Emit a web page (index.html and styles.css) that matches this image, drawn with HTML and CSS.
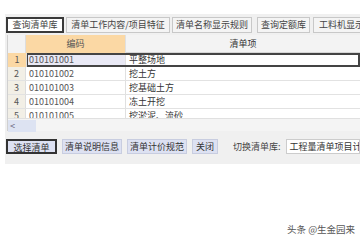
FILE: index.html
```html
<!DOCTYPE html>
<html lang="zh">
<head>
  <meta charset="UTF-8">
  <title>查询清单库</title>
  <link rel="stylesheet" href="styles.css">
</head>
<body>
  <div class="window">
    <div class="tabs">
      <div class="tab active">查询清单库</div>
      <div class="tab t2">清单工作内容/项目特征</div>
      <div class="tab t3">清单名称显示规则</div>
      <div class="tab t4">查询定额库</div>
      <div class="tab t5">工料机显示</div>
    </div>

    <div class="grid">
      <div class="row head">
        <div class="num"></div>
        <div class="code sorted">编码</div>
        <div class="name">清单项</div>
      </div>
      <div class="rows">
        <div class="row current">
          <div class="num">1</div>
          <div class="code">010101001</div>
          <div class="name">平整场地</div>
        </div>
        <div class="row">
          <div class="num">2</div>
          <div class="code">010101002</div>
          <div class="name">挖土方</div>
        </div>
        <div class="row">
          <div class="num">3</div>
          <div class="code">010101003</div>
          <div class="name">挖基础土方</div>
        </div>
        <div class="row">
          <div class="num">4</div>
          <div class="code">010101004</div>
          <div class="name">冻土开挖</div>
        </div>
        <div class="row">
          <div class="num">5</div>
          <div class="code">010101005</div>
          <div class="name">挖淤泥、流砂</div>
        </div>
      </div>
      <div class="hscroll">
        <span class="arrow">&lt;</span>
      </div>
    </div>

    <div class="actions">
      <button class="btn active">选择清单</button>
      <button class="btn wide">清单说明信息</button>
      <button class="btn wide">清单计价规范</button>
      <button class="btn short">关闭</button>
      <span class="label">切换清单库:</span>
      <div class="select">工程量清单项目计量规范</div>
    </div>
  </div>

  <div class="watermark">头条 @生金园来</div>
</body>
</html>
```

FILE: styles.css
```css
body {
  margin: 0;
  background-color: #fff;
  font-family: "Noto Sans CJK SC", "DejaVu Sans", sans-serif;
  font-size: 9px;
  color: #333;
  width: 360px;
  height: 240px;
  overflow: hidden;
  position: relative;
}
.window {
  margin: 14px 0 0 5px;
  height: 150px;
  background-color: #f0f0f0;
  padding: 3px 0 0 1px;
  box-sizing: border-box;
  overflow: hidden;
}
.tabs {
  display: flex;
  height: 16px;
  white-space: nowrap;
}
.tab {
  border: 1px solid #c8c8c8;
  background-color: #f4f4f4;
  line-height: 14px;
  color: #444;
  text-align: center;
  box-sizing: border-box;
  flex: none;
}
.tab.active {
  border: 2px solid #3a3a3a;
  background-color: #fff;
  line-height: 12px;
  width: 58px;
}
.tab.t2 {
  width: 104px;
  margin-left: 2px;
}
.tab.t3 {
  width: 80px;
  margin-left: 2px;
}
.tab.t4 {
  width: 53px;
  margin-left: 5px;
}
.tab.t5 {
  width: 60px;
  margin-left: 3px;
  text-align: left;
  padding-left: 5px;
}
.grid {
  margin: 2px 0 0 1px;
  background-color: #fff;
  border-left: 1px solid #d0d0d0;
}
.row {
  display: grid;
  grid-template-columns: 18px 100px 1fr;
  height: 14px;
  line-height: 13px;
  border-bottom: 1px solid #e2e2e2;
  box-sizing: border-box;
  white-space: nowrap;
}
.row .num {
  background-color: #f2efe6;
  text-align: center;
  border-right: 1px solid #ddd;
  color: #555;
}
.row .code {
  padding-left: 3px;
  border-right: 1px solid #e0e0e0;
  color: #555;
}
.row .name {
  padding-left: 3px;
}
.row.head {
  height: 18px;
  line-height: 18px;
  background-color: #f3f3f3;
  border-bottom: 1px solid #d6d6d6;
}
.row.head .num {
  background-color: #f3f3f3;
}
.row.head .code,
.row.head .name {
  text-align: center;
  padding: 0;
}
.row.head .sorted {
  background-color: #fbd8a4;
}
.rows {
  height: 65px;
  overflow: hidden;
}
.row.current {
  outline: 2px solid #444;
  outline-offset: -2px;
  margin-left: 18px;
  grid-template-columns: 100px 1fr;
  position: relative;
}
.row.current .num {
  position: absolute;
  left: -18px;
  width: 18px;
  height: 14px;
  background-color: #fbd8a4;
}
.row.current .code {
  background-color: #e9e9f5;
}
.hscroll {
  height: 12px;
  background-color: #f4f4f4;
  border-top: 1px solid #e0e0e0;
}
.hscroll .arrow {
  display: inline-block;
  width: 26px;
  height: 12px;
  line-height: 12px;
  padding-left: 2px;
  background-color: #dde3f2;
  color: #667;
}
.actions {
  display: flex;
  align-items: center;
  gap: 5px;
  margin-top: 8px;
  white-space: nowrap;
}
.btn {
  font-family: inherit;
  font-size: 9px;
  color: #333;
  height: 15px;
  padding: 0;
  margin: 0;
  border: 1px solid #c8cde0;
  background-color: #dde1f2;
  line-height: 13px;
  box-sizing: border-box;
  flex: none;
}
.btn.active {
  border: 2px solid #333;
  width: 51px;
}
.btn.wide {
  width: 60px;
}
.btn.short {
  width: 26px;
}
.label {
  margin-left: 10px;
  color: #444;
}
.select {
  background-color: #fff;
  border: 1px solid #ccc;
  height: 15px;
  line-height: 13px;
  padding-left: 3px;
  box-sizing: border-box;
  flex: 1;
  overflow: hidden;
}
.watermark {
  position: absolute;
  left: 287px;
  top: 222px;
  font-size: 9.5px;
  color: #555;
}
```
